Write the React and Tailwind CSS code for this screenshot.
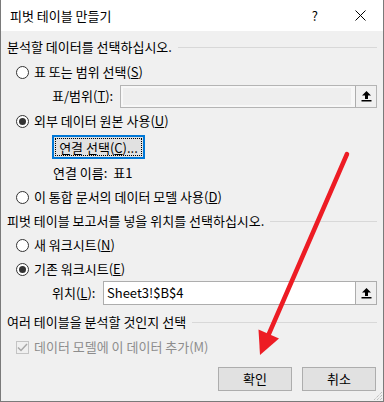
import React from 'react'

const F = "font-['Noto_Sans_CJK_KR','Noto_Sans',sans-serif]"

function Radio({ checked }){
  return (
    <span className="w-[13px] h-[13px] rounded-full border border-[#333333] bg-white flex items-center justify-center shrink-0">
      {checked && <span className="w-[7px] h-[7px] rounded-full bg-[#333333]" />}
    </span>
  )
}

function RadioRow({ checked, children }){
  return (
    <div className="h-[24px] flex items-center pl-[9px] gap-[5px]">
      <Radio checked={checked} />
      <span>{children}</span>
    </div>
  )
}

function Header({ children, className = '' }){
  return (
    <div className={`h-[24px] flex items-center ${className}`}>
      <span className="whitespace-nowrap">{children}</span>
      <span className="flex-1 h-px bg-[#d8d8d8] ml-[6px]" />
    </div>
  )
}

function UpIcon(){
  return (
    <svg width="11" height="12" viewBox="0 0 11 12">
      <path d="M5.5 1 L10 5.5 L7 5.5 L7 9 L4 9 L4 5.5 L1 5.5 Z" fill="#000" />
      <rect x="0.5" y="10" width="10" height="1.5" fill="#000" />
    </svg>
  )
}

function PickBtn(){
  return (
    <span className="w-[21px] h-full border-l border-[#adadad] bg-[#f0f0f0] flex items-center justify-center">
      <UpIcon />
    </span>
  )
}

export default function App(){
  return (
    <div className={`w-[384px] h-[402px] flex flex-col border-x border-b border-[#7a7a7a] text-[13px] text-black relative overflow-hidden ${F}`}>
      <div className="h-[31px] bg-white flex items-center pl-[9px] shrink-0">
        <span className="flex-1">피벗 테이블 만들기</span>
        <span className="text-[13px] mr-[37px]">?</span>
        <svg width="11" height="11" viewBox="0 0 11 11" className="mr-[17px]">
          <path d="M0.5 0.5 L10.5 10.5 M10.5 0.5 L0.5 10.5" stroke="#000" strokeWidth="1" />
        </svg>
      </div>

      <div className="flex-1 bg-[#f0f0f0] px-[6px] pt-[4px] flex flex-col">
        <Header>분석할 데이터를 선택하십시오.</Header>
        <div className="mt-[1px]">
          <RadioRow>표 또는 범위 선택(<u>S</u>)</RadioRow>
        </div>
        <div className="h-[24px] flex items-center pl-[45px]">
          <span className="w-[68px]">표/범위(<u>T</u>):</span>
          <div className="flex-1 h-[23px] border border-[#b4b4b4] bg-[#f7f7f7] flex items-stretch">
            <span className="flex-1 m-[2px] mr-[4px] bg-[#eeeeee]" />
            <PickBtn />
          </div>
        </div>
        <div className="mt-[1px]">
          <RadioRow checked>외부 데이터 원본 사용(<u>U</u>)</RadioRow>
        </div>
        <div className="mt-[2px] pl-[45px]">
          <button className="w-[93px] h-[24px] border-2 border-[#0078d7] bg-[#e1e1e1] p-[1px] flex">
            <span className="flex-1 border border-dotted border-[#000] flex items-center justify-center leading-none whitespace-nowrap">
              연결 선택(<u>C</u>)...
            </span>
          </button>
        </div>
        <div className="mt-[2px] h-[24px] flex items-center pl-[46px]">
          연결 이름:&nbsp;&nbsp;표1
        </div>
        <RadioRow>이 통합 문서의 데이터 모델 사용(<u>D</u>)</RadioRow>

        <Header>피벗 테이블 보고서를 넣을 위치를 선택하십시오.</Header>
        <RadioRow>새 워크시트(<u>N</u>)</RadioRow>
        <RadioRow checked>기존 워크시트(<u>E</u>)</RadioRow>
        <div className="h-[24px] flex items-center pl-[45px]">
          <span className="w-[51px]">위치(<u>L</u>):</span>
          <div className="flex-1 h-[24px] border border-[#adadad] bg-white flex items-stretch">
            <span className="flex-1 pl-[3px] flex items-center">Sheet3!$B$4</span>
            <PickBtn />
          </div>
        </div>

        <Header className="mt-[5px]">여러 테이블을 분석할 것인지 선택</Header>
        <div className="mt-[1px] h-[24px] flex items-center pl-[9px] gap-[5px] text-[#8d8d8d]">
          <span className="w-[13px] h-[13px] border border-[#c4c4c4] bg-[#f0f0f0] flex items-center justify-center">
            <svg width="11" height="9" viewBox="0 0 11 9">
              <path d="M1 4.5 L4 7.5 L10 1" stroke="#a8a8a8" strokeWidth="1.5" fill="none" />
            </svg>
          </span>
          <span>데이터 모델에 이 데이터 추가(M)</span>
        </div>

        <div className="mt-[8px] flex justify-end gap-[10px] pr-[1px]">
          <button className="w-[74px] h-[24px] border border-[#adadad] bg-[#e1e1e1]">확인</button>
          <button className="w-[74px] h-[24px] border border-[#adadad] bg-[#e1e1e1]">취소</button>
        </div>
      </div>

      <svg className="absolute right-0 bottom-0" width="12" height="12" viewBox="0 0 12 12">
        <path d="M11 3 L3 11 M11 6 L6 11 M11 9 L9 11" stroke="#a8a8a8" strokeWidth="1" strokeDasharray="1 1" />
      </svg>

      <svg className="absolute left-0 top-0 pointer-events-none" width="384" height="402" viewBox="0 0 384 402">
        <line x1="346" y1="154" x2="267" y2="336" stroke="#ed1c24" strokeWidth="4.5" strokeLinecap="round" />
        <path d="M259 355 L257.5 329.5 L278 338.5 Z" fill="#ed1c24" />
      </svg>
    </div>
  )
}
